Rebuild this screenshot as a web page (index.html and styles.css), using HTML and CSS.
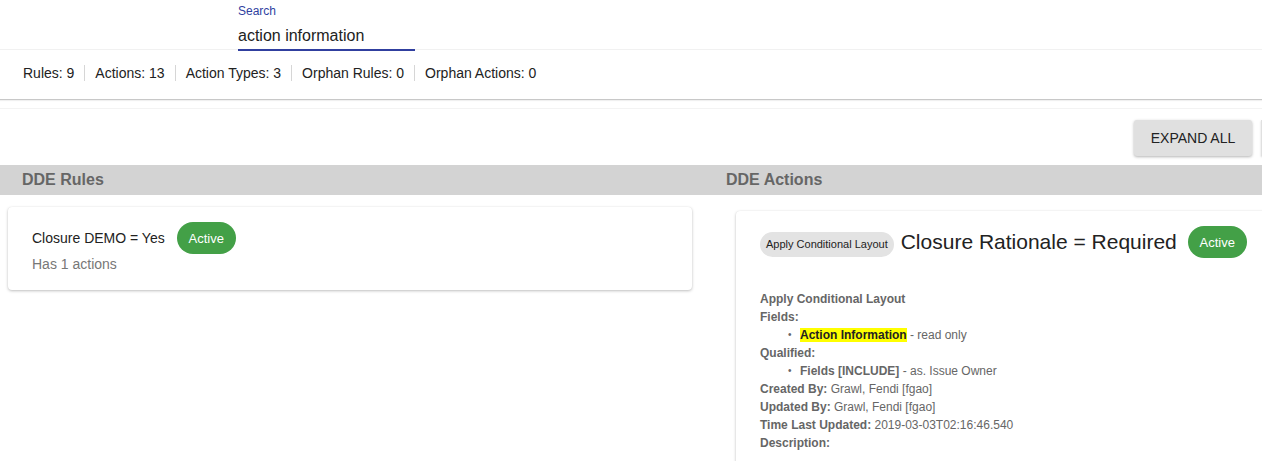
FILE: index.html
```html
<!DOCTYPE html>
<html>
<head>
<meta charset="utf-8">
<link rel="stylesheet" href="styles.css">
</head>
<body>
<div class="page">
  <div class="search-bar">
    <div class="search-field">
      <label class="search-label">Search</label>
      <div class="search-input">action information</div>
    </div>
  </div>
  <div class="stats">
    <span class="stat">Rules: 9</span>
    <span class="stat">Actions: 13</span>
    <span class="stat">Action Types: 3</span>
    <span class="stat">Orphan Rules: 0</span>
    <span class="stat">Orphan Actions: 0</span>
  </div>
  <div class="toolbar">
    <button class="btn">EXPAND ALL</button>
    <span class="btn-edge"></span>
  </div>
  <div class="columns">
    <div class="col col-left">
      <div class="col-head">DDE Rules</div>
      <div class="card rule-card">
        <div class="rule-row">
          <span class="rule-name">Closure DEMO = Yes</span>
          <span class="pill">Active</span>
        </div>
        <div class="rule-sub">Has 1 actions</div>
      </div>
    </div>
    <div class="col col-right">
      <div class="col-head">DDE Actions</div>
      <div class="card action-card">
        <div class="action-row">
          <span class="chip">Apply Conditional Layout</span>
          <span class="action-title">Closure Rationale = Required</span>
          <span class="pill">Active</span>
        </div>
        <div class="details">
          <div class="line b">Apply Conditional Layout</div>
          <div class="line b">Fields:</div>
          <ul class="list">
            <li><b class="hl">Action Information</b> - read only</li>
          </ul>
          <div class="line b">Qualified:</div>
          <ul class="list">
            <li><b>Fields [INCLUDE]</b> - as. Issue Owner</li>
          </ul>
          <div class="line"><b>Created By:</b> Grawl, Fendi [fgao]</div>
          <div class="line"><b>Updated By:</b> Grawl, Fendi [fgao]</div>
          <div class="line"><b>Time Last Updated:</b> 2019-03-03T02:16:46.540</div>
          <div class="line b">Description:</div>
        </div>
      </div>
    </div>
  </div>
</div>
</body>
</html>
```

FILE: styles.css
```css
html, body {
  margin: 0;
  padding: 0;
  background: #fff;
  overflow: hidden;
}
body {
  font-family: "Liberation Sans", Arial, sans-serif;
  color: #222;
}
.page {
  width: 1262px;
  height: 461px;
  overflow: hidden;
}
.search-bar {
  height: 50px;
  border-bottom: 1px solid #f1f1f1;
  padding-left: 238px;
  box-sizing: border-box;
}
.search-field {
  width: 177px;
  padding-top: 4px;
}
.search-label {
  display: block;
  font-size: 12px;
  line-height: 14px;
  color: #303f9f;
}
.search-input {
  font-size: 16px;
  line-height: 20px;
  padding: 8px 0 3px;
  color: #222;
  border-bottom: 2px solid #303f9f;
}
.stats {
  height: 50px;
  box-sizing: border-box;
  padding-bottom: 4px;
  display: flex;
  align-items: center;
  padding-left: 13px;
  border-bottom: 1px solid #c8c8c8;
  box-shadow: 0 1px 1px rgba(0,0,0,0.06);
  font-size: 14px;
  color: #222;
}
.stat {
  padding: 0 10px;
  line-height: 16px;
  border-left: 1px solid #d6d6d6;
}
.stat:first-child {
  border-left: none;
}
.toolbar {
  margin-top: 8px;
  border-top: 1px solid #f3f3f3;
  height: 57px;
  display: flex;
  justify-content: flex-end;
  align-items: flex-start;
  gap: 9px;
  padding-top: 11px;
  box-sizing: border-box;
}
.btn {
  height: 36px;
  width: 118px;
  border: none;
  border-radius: 3px;
  background: #e0e0e0;
  box-shadow: 0 1px 3px rgba(0,0,0,0.3);
  font-family: "Liberation Sans", Arial, sans-serif;
  font-size: 14px;
  color: #222;
  padding: 0;
}
.btn-edge {
  width: 1px;
  height: 36px;
  background: #e0e0e0;
  box-shadow: 0 1px 2px rgba(0,0,0,0.25);
}
.columns {
  display: grid;
  grid-template-columns: 704px 620px;
  background: linear-gradient(#d3d3d3, #d3d3d3) no-repeat top / 100% 30px;
}
.col-head {
  height: 30px;
  line-height: 30px;
  font-size: 16px;
  font-weight: bold;
  color: #666;
  padding-left: 22px;
}
.card {
  background: #fff;
  border-radius: 4px;
  box-shadow: 0 1px 3px rgba(0,0,0,0.25), 0 0 1px rgba(0,0,0,0.08);
}
.rule-card {
  margin: 12px 12px 0 8px;
  height: 83px;
  box-sizing: border-box;
  padding: 15px 24px 0;
}
.rule-row {
  display: flex;
  align-items: center;
  gap: 12px;
}
.rule-name {
  font-size: 14px;
  color: #222;
}
.pill {
  display: inline-flex;
  align-items: center;
  justify-content: center;
  width: 59px;
  height: 32px;
  border-radius: 16px;
  background: #43a047;
  color: #fff;
  font-size: 13px;
}
.rule-sub {
  font-size: 14px;
  color: #777;
  margin-top: 2px;
}
.action-card {
  margin: 16px 0 0 32px;
  height: 300px;
  padding: 15px 24px 0;
}
.action-row {
  display: flex;
  align-items: center;
}
.chip {
  display: inline-flex;
  align-items: center;
  height: 25px;
  padding: 0 6px;
  border-radius: 13px;
  background: #e3e3e3;
  font-size: 11px;
  color: #222;
  margin-top: 4px;
}
.action-title {
  font-size: 21px;
  color: #222;
  margin: 0 11px 0 7px;
}
.details {
  margin-top: 32px;
  font-size: 12px;
  line-height: 18px;
  color: #666;
}
.line.b, .line b {
  font-weight: bold;
}
.list {
  margin: 0;
  padding-left: 40px;
  list-style: none;
}
.list li {
  position: relative;
}
.list li::before {
  content: "•";
  position: absolute;
  left: -12px;
  color: #666;
  font-size: 10px;
}
.hl {
  background: #ffff00;
  color: #222;
}
.list b {
  color: #666;
}
.list b.hl {
  color: #222;
}
```
